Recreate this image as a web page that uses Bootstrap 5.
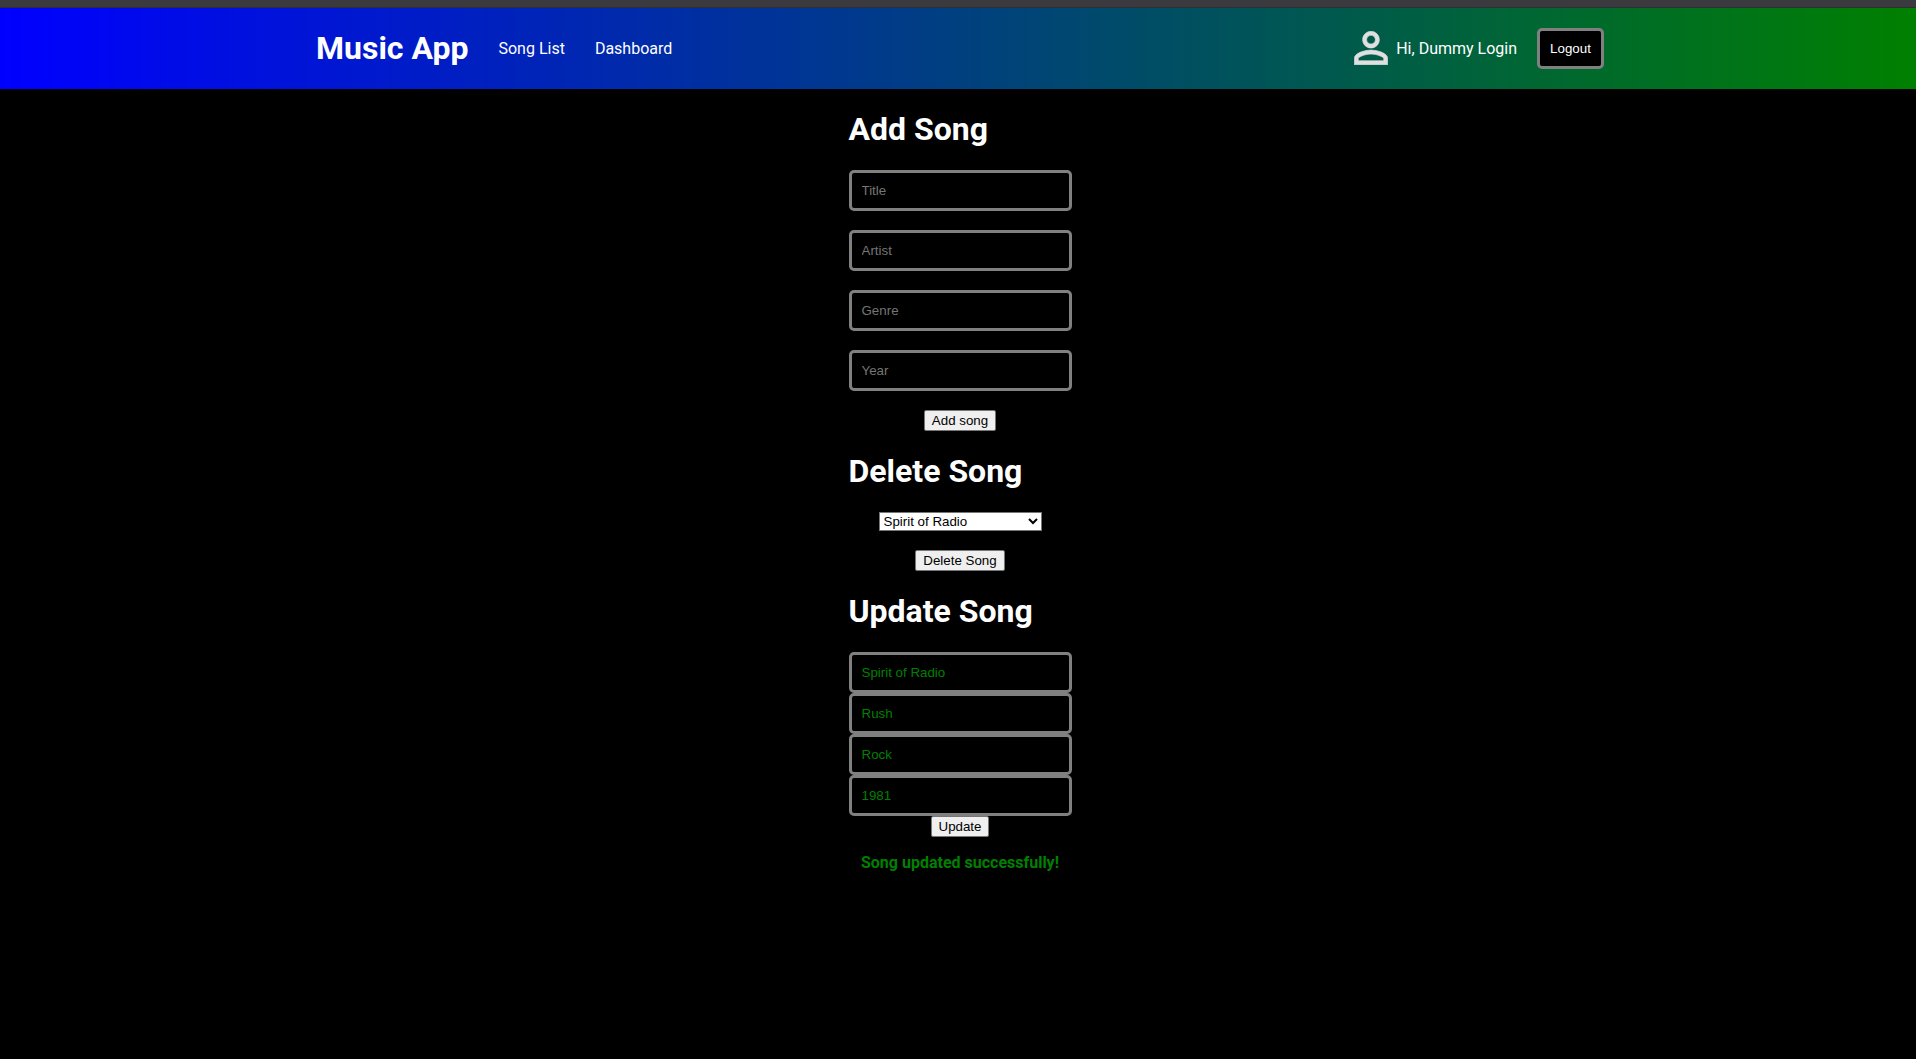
<!DOCTYPE html>
<html lang="en">
<head>
<meta charset="utf-8">
<title>Music App</title>
<link rel="stylesheet" href="https://cdn.jsdelivr.net/npm/bootstrap@5.3.0/dist/css/bootstrap.min.css">
<style>
body { background: #000; color: #fff; font-family: Roboto, sans-serif; font-size: 16px; line-height: 19px; min-height: 100vh; overflow: hidden; }
.top-strip { height: 8px; background: #3b3a3f; border-bottom: 1px solid #2f2f35; }
.app-header { height: 81px; background: linear-gradient(90deg, blue, green); }
.header-inner { width: 1288px; margin-left: 316px; }
.brand, .section-title { font-size: 32px; font-weight: 700; line-height: 38px; margin: 0; }
.brand { padding-bottom: 2px; }
.header-nav { gap: 30px; }
.header-nav a { color: #fff; }
.user-icon { width: 34px; height: 34px; fill: #e0e0e0; stroke: #e0e0e0; stroke-width: .3; margin: 0 8px 1px 0; }
.btn-logout, .field { font: 13.3333px/15px "Liberation Sans", Arial, sans-serif; border: 3px solid gray; border-radius: 5px; background: #000; padding: 10px; height: 41px; }
.btn-logout { color: #fff; width: 67px; margin-left: 20px; }
.song-panel { width: 223px; margin-left: 848.5px; }
.section-title { margin: 21px 0 22px; width: 100%; white-space: nowrap; }
.field { width: 223px; color: green; display: block; outline: 0; }
.field::placeholder { color: #757575; opacity: 1; }
.add-fields { gap: 19px; margin-bottom: 19px; }
.btn-plain { font: 13.3333px/15px "Liberation Sans", Arial, sans-serif; color: #000; background: #efefef; border: 1px solid #767676; border-radius: 2px; padding: 2px 7px; height: 21px; }
.song-select { font: 13.3333px "Liberation Sans", Arial, sans-serif; width: 163px; height: 19px; color: #000; background: #fff; border: 1px solid #767676; border-radius: 0; margin-bottom: 19px; }
.status-text { color: green; font-weight: 700; margin: 16px 0; }
</style>
<script src="https://cdn.jsdelivr.net/npm/bootstrap@5.3.0/dist/js/bootstrap.bundle.min.js"></script>
</head>
<body>
<div class="top-strip"></div>
<header class="app-header d-flex align-items-center">
  <div class="header-inner d-flex align-items-center justify-content-between">
    <nav class="header-nav d-flex align-items-center">
      <h1 class="brand">Music App</h1>
      <a class="text-decoration-none" href="#">Song List</a>
      <a class="text-decoration-none" href="#">Dashboard</a>
    </nav>
    <div class="d-flex align-items-center">
      <svg class="user-icon" viewBox="3.85 3.85 16.3 16.3" aria-hidden="true"><path d="M12 5.9a2.1 2.1 0 1 1 0 4.2 2.1 2.1 0 0 1 0-4.2m0 9c2.97 0 6.1 1.46 6.1 2.1v1.1H5.9V17c0-.64 3.13-2.1 6.1-2.1M12 4C9.79 4 8 5.79 8 8s1.79 4 4 4 4-1.79 4-4-1.79-4-4-4m0 9c-2.67 0-8 1.34-8 4v3h16v-3c0-2.66-5.33-4-8-4"/></svg>
      <span>Hi, Dummy Login</span>
      <button class="btn-logout" type="button">Logout</button>
    </div>
  </div>
</header>
<main class="song-panel d-flex flex-column align-items-center">
  <h1 class="section-title">Add Song</h1>
  <div class="add-fields d-flex flex-column">
    <input class="field" placeholder="Title">
    <input class="field" placeholder="Artist">
    <input class="field" placeholder="Genre">
    <input class="field" placeholder="Year">
  </div>
  <button class="btn-plain" type="button">Add song</button>
  <h1 class="section-title">Delete Song</h1>
  <select class="song-select"><option>Spirit of Radio</option></select>
  <button class="btn-plain" type="button">Delete Song</button>
  <h1 class="section-title">Update Song</h1>
  <div class="d-flex flex-column">
    <input class="field" value="Spirit of Radio">
    <input class="field" value="Rush">
    <input class="field" value="Rock">
    <input class="field" value="1981">
  </div>
  <button class="btn-plain" type="button">Update</button>
  <p class="status-text text-nowrap">Song updated successfully!</p>
</main>
</body>
</html>
